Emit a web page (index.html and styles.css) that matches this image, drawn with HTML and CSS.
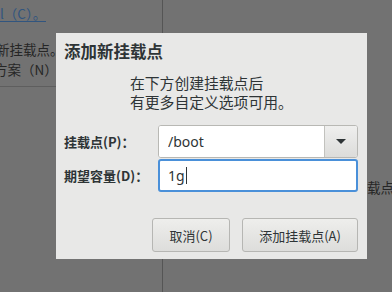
FILE: index.html
```html
<!DOCTYPE html>
<html>
<head>
  <title>添加新挂载点</title>
  <link rel="stylesheet" href="styles.css">
</head>
<body>
  <div class="backdrop">
    <div class="left-pane">
      <p class="bg-link">l（C）。</p>
      <p class="bg-text first">新挂载点。</p>
      <p class="bg-text second">方案（N）</p>
      <div class="bg-rule"></div>
    </div>
    <div class="right-pane">
      <p class="bg-side">载点后</p>
    </div>
  </div>

  <div class="dialog">
    <h1>添加新挂载点</h1>
    <p class="hint">在下方创建挂载点后<br>有更多自定义选项可用。</p>

    <div class="form">
      <label for="mountPoint">挂载点(<u>P</u>)：</label>
      <div class="combo">
        <input type="text" id="mountPoint" value="/boot">
        <span class="combo-btn"><span class="arrow"></span></span>
      </div>

      <label for="capacity">期望容量(<u>D</u>)：</label>
      <div class="entry"><span>1g</span><span class="caret"></span></div>
    </div>

    <div class="actions">
      <button class="btn cancel">取消(C)</button>
      <button class="btn add">添加挂载点(A)</button>
    </div>
  </div>
</body>
</html>
```

FILE: styles.css
```css
html, body {
  margin: 0;
  padding: 0;
  width: 392px;
  height: 292px;
  overflow: hidden;
  background-color: #727272;
  font-family: "Noto Sans CJK SC", "Noto Sans", sans-serif;
}

.backdrop {
  display: flex;
  height: 292px;
}

.left-pane {
  width: 162px;
  border-right: 1px solid #555;
  overflow: hidden;
}

.bg-link {
  margin: 1px 0 0 0;
  font-size: 13.5px;
  line-height: 15px;
  color: #31557f;
  display: inline-block;
  border-bottom: 1px solid #31557f;
  white-space: nowrap;
}

.bg-text {
  font-size: 13.5px;
  line-height: 20px;
  color: #262626;
  white-space: nowrap;
}

.bg-text.first {
  margin: 15px 0 0 -4px;
}

.bg-text.second {
  margin: 0 0 0 -6px;
}

.bg-rule {
  margin-top: 7px;
  border-top: 1px solid #5e5e5e;
}

.right-pane {
  flex: 1;
  overflow: hidden;
}

.bg-side {
  margin: 179px 0 0 204px;
  font-size: 13.5px;
  line-height: 16px;
  color: #262626;
  white-space: nowrap;
}

.dialog {
  position: absolute;
  left: 56px;
  top: 33px;
  width: 311px;
  height: 226px;
  box-sizing: border-box;
  background-color: #e8e8e7;
  padding: 7px 9px 0 8px;
  color: #2e3436;
}

.dialog h1 {
  margin: 0;
  font-size: 16.5px;
  line-height: 22px;
  font-weight: bold;
}

.hint {
  margin: 11px 0 0 66px;
  font-size: 14.8px;
  line-height: 19px;
}

.form {
  display: grid;
  grid-template-columns: 94px 200px;
  grid-auto-rows: 33px;
  row-gap: 1px;
  align-items: center;
  margin-top: 14px;
}

.form label {
  font-size: 13px;
  font-weight: bold;
}

.form label u {
  text-decoration: none;
}

.combo {
  display: flex;
  height: 33px;
  box-sizing: border-box;
  border: 1px solid #b8b8b4;
  border-radius: 3px;
  background: #fff;
  overflow: hidden;
}

.combo input {
  flex: 1;
  min-width: 0;
  border: none;
  outline: none;
  padding: 0 0 0 9px;
  font-family: "Noto Sans", sans-serif;
  font-size: 14px;
  color: #2e3436;
  background: #fff;
}

.combo-btn {
  width: 32px;
  border-left: 1px solid #c2c2be;
  background: linear-gradient(#efefee, #dcdcda);
  display: flex;
  align-items: center;
  justify-content: center;
}

.arrow {
  width: 0;
  height: 0;
  border-left: 5px solid transparent;
  border-right: 5px solid transparent;
  border-top: 5px solid #2e3436;
}

.entry {
  height: 33px;
  box-sizing: border-box;
  border: 2px solid #4a90d9;
  border-radius: 3px;
  background: #fff;
  display: flex;
  align-items: center;
  padding-left: 8px;
  font-family: "Noto Sans", sans-serif;
  font-size: 14px;
  color: #2e3436;
}

.caret {
  width: 1px;
  height: 17px;
  background: #2e3436;
  margin-left: 1px;
}

.actions {
  display: flex;
  justify-content: flex-end;
  gap: 12px;
  margin-top: 26px;
}

.btn {
  height: 34px;
  border: 1px solid #b6b6b3;
  border-radius: 3px;
  background: linear-gradient(#eeeeec, #dddddb);
  font-family: "Noto Sans CJK SC", "Noto Sans", sans-serif;
  font-size: 13px;
  color: #2e3436;
  padding: 0;
}

.btn.cancel {
  width: 78px;
}

.btn.add {
  width: 116px;
}
```
